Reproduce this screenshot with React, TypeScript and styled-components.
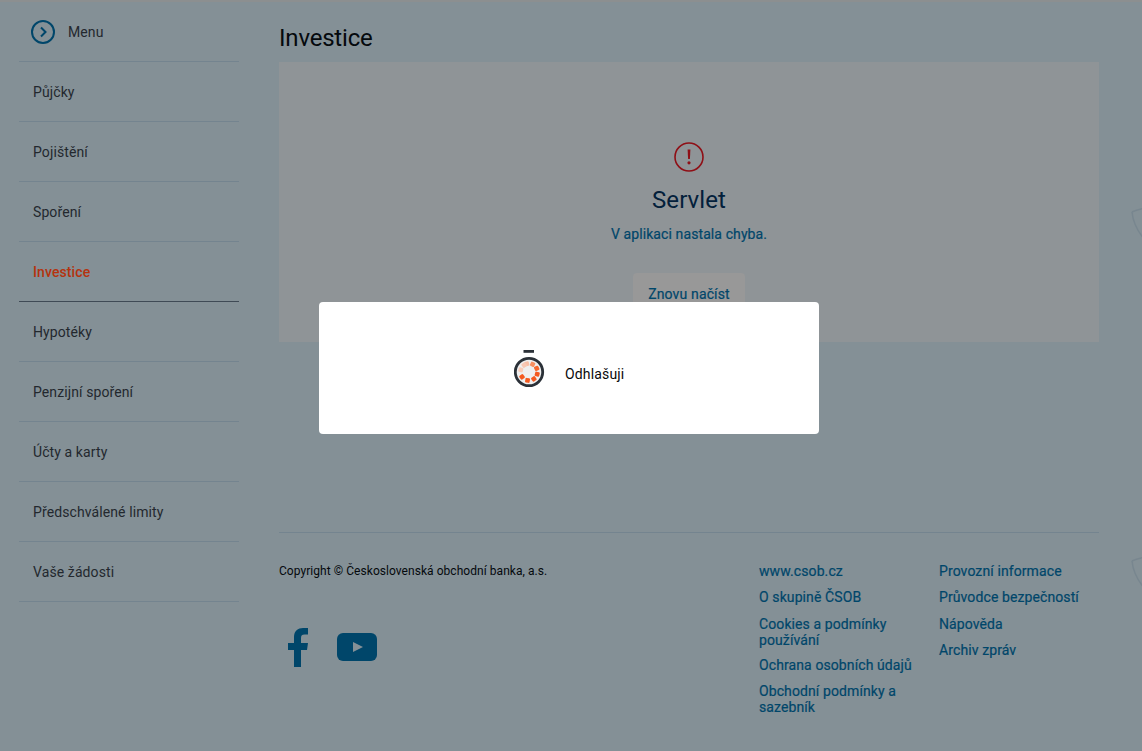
import React from "react"
import styled, { createGlobalStyle } from "styled-components"

const Global = createGlobalStyle`
  html, body {
    margin: 0;
    padding: 0;
    height: 100%;
    overflow: hidden;
    background: #849096;
    font-family: Roboto, "Liberation Sans", sans-serif;
  }
`

const Page = styled.div`
  position: relative;
  width: 1142px;
  height: 751px;
  overflow: hidden;
  box-sizing: border-box;
  border-top: 2px solid #8c8f90;
  background: #849096;
  display: flex;
  align-items: flex-start;
`

const Sidebar = styled.nav`
  width: 220px;
  margin-left: 19px;
  flex-shrink: 0;
  display: flex;
  flex-direction: column;
`

const MenuHead = styled.div`
  height: 60px;
  box-sizing: border-box;
  padding: 0 0 0 12px;
  display: flex;
  align-items: center;
  gap: 13px;
  border-bottom: 1px solid #74848f;
  font-size: 14px;
  letter-spacing: 0.1px;
  color: #23282e;
`

const MenuLabel = styled.span`
  margin-top: 1px;
`

const NavItem = styled.a<{ $active?: boolean }>`
  height: 60px;
  box-sizing: border-box;
  padding-left: 14px;
  display: flex;
  align-items: center;
  border-bottom: 1px solid ${p => (p.$active ? "#3f4a55" : "#74848f")};
  font-size: 14px;
  letter-spacing: 0.1px;
  font-weight: ${p => (p.$active ? 500 : 400)};
  color: ${p => (p.$active ? "#b5330e" : "#23282e")};
`

const Main = styled.main`
  width: 820px;
  margin-left: 40px;
  flex-shrink: 0;
`

const PageTitle = styled.h1`
  margin: 0;
  height: 60px;
  box-sizing: border-box;
  padding-top: 22px;
  font-size: 24px;
  line-height: 29px;
  letter-spacing: -0.2px;
  font-weight: 400;
  color: #05090d;
`

const ErrorPanel = styled.section`
  height: 280px;
  box-sizing: border-box;
  padding-top: 80px;
  background: #8f9497;
  display: flex;
  flex-direction: column;
  align-items: center;
`

const PanelTitle = styled.h2`
  margin: 13px 0 0;
  font-size: 24px;
  line-height: 30px;
  letter-spacing: 0.1px;
  font-weight: 400;
  color: #03203b;
`

const PanelText = styled.p`
  margin: 9px 0 0;
  font-size: 14px;
  line-height: 20px;
  letter-spacing: 0.1px;
  font-weight: 400;
  color: #00466a;
  -webkit-text-stroke: 0.2px #00466a;
`

const Reload = styled.button`
  margin-top: 29px;
  width: 112px;
  height: 42px;
  border: 0;
  border-radius: 4px;
  background: #989898;
  font: 400 14px Roboto, sans-serif;
  letter-spacing: 0.15px;
  -webkit-text-stroke: 0.2px #00466a;
  color: #00466a;
`

const Footer = styled.footer`
  margin-top: 190px;
  border-top: 1px solid #74848f;
  padding-top: 30px;
  display: flex;
`

const FooterLeft = styled.div`
  width: 480px;
  flex-shrink: 0;
`

const Copyright = styled.div`
  font-size: 12px;
  line-height: 16px;
  letter-spacing: 0.05px;
  color: #05090d;
`

const Social = styled.div`
  margin-top: 49px;
  display: flex;
  align-items: center;
  gap: 29px;
  padding-left: 9px;
`

const LinkColumn = styled.div`
  width: 160px;
  margin-right: 20px;
  flex-shrink: 0;
  display: flex;
  flex-direction: column;
  gap: 10px;

  &:last-child {
    margin-right: 0;
  }
`

const FooterLink = styled.a`
  font-size: 14px;
  line-height: 16px;
  font-weight: 400;
  letter-spacing: 0.1px;
  -webkit-text-stroke: 0.2px #00466a;
  color: #00466a;

  &:nth-child(3) {
    margin-top: 1px;
  }

  &:nth-child(4):nth-last-child(2) {
    margin-top: -1px;
  }
`

const Shield = styled.svg<{ $top: number }>`
  position: absolute;
  left: 1131px;
  top: ${p => p.$top}px;
`

const YouTube = styled.svg`
  margin-bottom: 2px;
`

const Modal = styled.div`
  position: absolute;
  left: 319px;
  top: 300px;
  width: 500px;
  height: 132px;
  background: #fff;
  border-radius: 4px;
  display: flex;
  align-items: center;
  padding: 2px 0 0 195px;
  box-sizing: border-box;
  gap: 19px;
`

const ModalText = styled.span`
  margin-top: 10px;
  font-size: 14px;
  letter-spacing: 0.15px;
  color: #0a0a0a;
`

const navItems = [
  "Půjčky",
  "Pojištění",
  "Spoření",
  "Investice",
  "Hypotéky",
  "Penzijní spoření",
  "Účty a karty",
  "Předschválené limity",
  "Vaše žádosti"
]

const linksA = [
  "www.csob.cz",
  "O skupině ČSOB",
  "Cookies a podmínky používání",
  "Ochrana osobních údajů",
  "Obchodní podmínky a sazebník"
]

const linksB = [
  "Provozní informace",
  "Průvodce bezpečností",
  "Nápověda",
  "Archiv zpráv"
]

const dots: [number, string][] = [
  [-15, "#f8bfa6"],
  [25, "#f78f60"],
  [65, "#f5682f"],
  [105, "#f4591f"],
  [145, "#f4591f"],
  [190, "#f4591f"],
  [235, "#f4591f"],
  [285, "#f9cdb9"],
  [325, "#f8c8b4"]
]

function Spinner() {
  return (
    <svg width="32" height="38" viewBox="0 0 32 38">
      <rect x="9.5" y="0" width="10.5" height="2.8" fill="#2b3138" />
      <circle cx="15" cy="22" r="13.7" fill="#efefef" stroke="#2b3138" strokeWidth="2.8" />
      {dots.map(([angle, color]) => (
        <rect
          key={angle}
          x="12.7"
          y="11.2"
          width="4.6"
          height="4.6"
          rx="1"
          fill={color}
          transform={`rotate(${angle} 15 22)`}
        />
      ))}
    </svg>
  )
}

function ShieldMark({ top }: { top: number }) {
  return (
    <Shield $top={top} width="14" height="44" viewBox="0 0 14 44">
      <path d="M1 6 C5 4 9 3 14 2 M1 6 C2 16 7 26 14 34" fill="none" stroke="#78868f" strokeWidth="1.5" />
    </Shield>
  )
}

export default function App() {
  return (
    <Page>
      <Global />
      <ShieldMark top={204} />
      <ShieldMark top={553} />

      <Sidebar>
        <MenuHead>
          <svg width="24" height="24" viewBox="0 0 24 24" fill="none">
            <circle cx="12" cy="12" r="11" stroke="#00466a" strokeWidth="2" />
            <path d="M10 7.5 L14.5 12 L10 16.5" stroke="#00466a" strokeWidth="2" />
          </svg>
          <MenuLabel>Menu</MenuLabel>
        </MenuHead>
        {navItems.map(item => (
          <NavItem key={item} $active={item === "Investice"}>{item}</NavItem>
        ))}
      </Sidebar>

      <Main>
        <PageTitle>Investice</PageTitle>
        <ErrorPanel>
          <svg width="30" height="30" viewBox="0 0 30 30" fill="none">
            <circle cx="15" cy="15" r="14" stroke="#8f0f16" strokeWidth="1.6" />
            <path d="M13.6 7.5 h2.8 l-.5 9.5 h-1.8 z" fill="#8f0f16" />
            <circle cx="15" cy="20.8" r="1.6" fill="#8f0f16" />
          </svg>
          <PanelTitle>Servlet</PanelTitle>
          <PanelText>V aplikaci nastala chyba.</PanelText>
          <Reload>Znovu načíst</Reload>
        </ErrorPanel>

        <Footer>
          <FooterLeft>
            <Copyright>Copyright © Československá obchodní banka, a.s.</Copyright>
            <Social>
              <svg width="20" height="39" viewBox="0 0 20 39">
                <path d="M6 39 V22 H0 V15 H6 V9 C6 3 10 0 15 0 H20 V6.5 H16.5 C14 6.5 13 7.5 13 10 V15 H20 L19 22 H13 V39 Z" fill="#00466a" />
              </svg>
              <YouTube width="40" height="28" viewBox="0 0 40 28">
                <rect width="40" height="28" rx="6" fill="#00466a" />
                <path d="M16 9 L26 14 L16 19 Z" fill="#849096" />
              </YouTube>
            </Social>
          </FooterLeft>
          <LinkColumn>
            {linksA.map(l => <FooterLink key={l}>{l}</FooterLink>)}
          </LinkColumn>
          <LinkColumn>
            {linksB.map(l => <FooterLink key={l}>{l}</FooterLink>)}
          </LinkColumn>
        </Footer>
      </Main>

      <Modal>
        <Spinner />
        <ModalText>Odhlašuji</ModalText>
      </Modal>
    </Page>
  )
}
